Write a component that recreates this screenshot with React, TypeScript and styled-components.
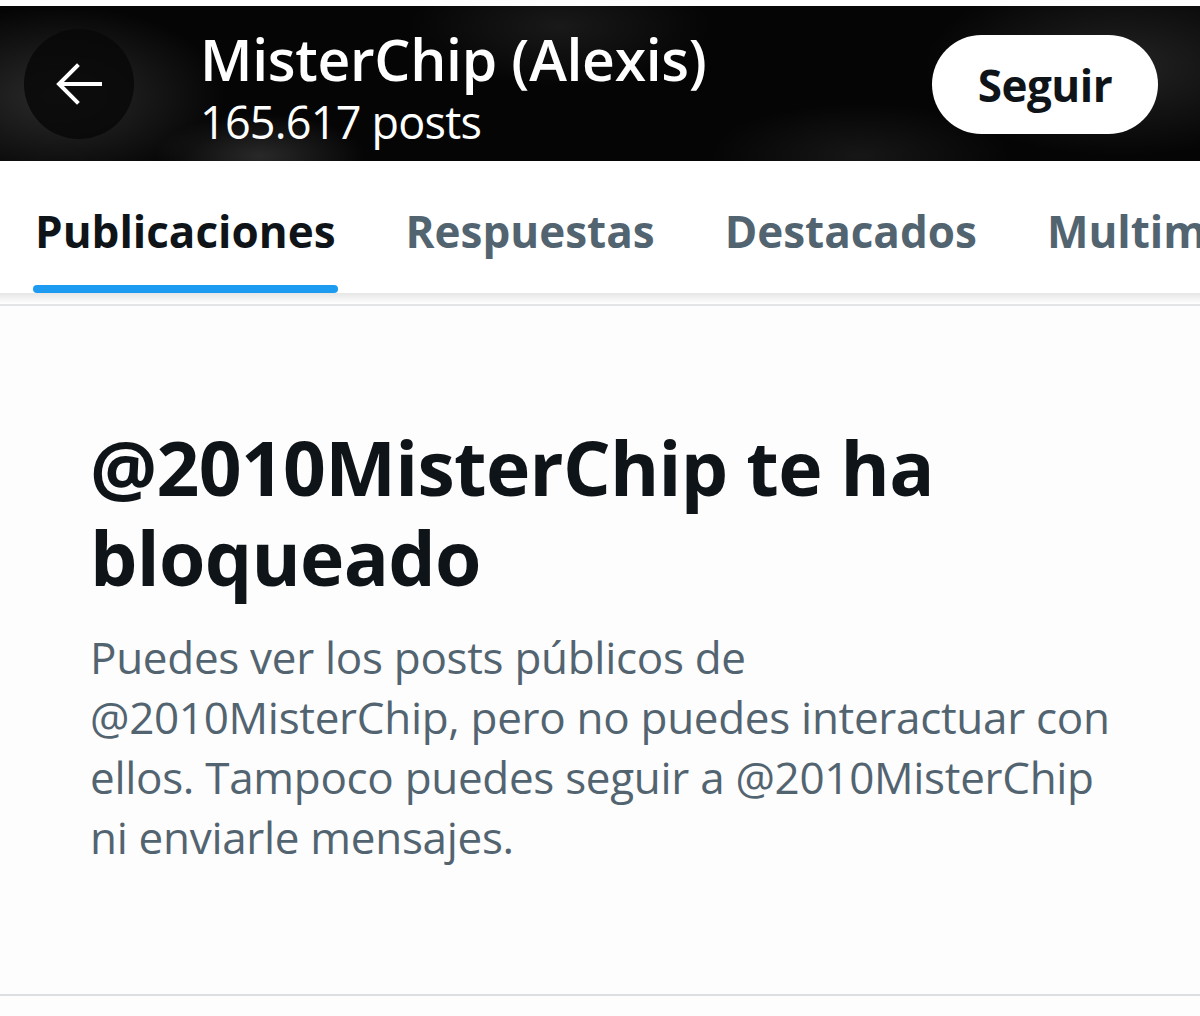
import React from "react";
import styled, { createGlobalStyle } from "styled-components";

const GlobalStyle = createGlobalStyle`
  html, body { margin: 0; padding: 0; background: #ffffff; }
  body { font-family: "Open Sans", "Liberation Sans", Arial, sans-serif; }
  * { box-sizing: border-box; }
`;

const Page = styled.div`
  width: 1200px;
  min-height: 1016px;
  padding-top: 6px;
  background: #fdfdfd;
  overflow: hidden;
`;

const Header = styled.header`
  height: 155px;
  display: flex;
  align-items: center;
  padding: 0 42px 0 24px;
  background:
    radial-gradient(ellipse 150px 60px at 260px 150px, rgba(70,70,70,0.55), transparent 70%),
    radial-gradient(ellipse 220px 120px at 60px 90px, rgba(60,60,60,0.7), transparent 75%),
    radial-gradient(ellipse 260px 120px at 1120px 60px, rgba(55,55,55,0.6), transparent 75%),
    radial-gradient(ellipse 200px 80px at 560px 20px, rgba(45,45,45,0.5), transparent 75%),
    radial-gradient(ellipse 200px 70px at 860px 150px, rgba(40,40,40,0.5), transparent 75%),
    #050505;
  color: #ffffff;
`;

const BackButton = styled.button`
  width: 110px;
  height: 110px;
  border-radius: 50%;
  border: none;
  background: rgba(8, 8, 8, 0.85);
  display: flex;
  align-items: center;
  justify-content: center;
  padding: 0;
  flex-shrink: 0;
`;

const TitleBlock = styled.div`
  margin-left: 66px;
  display: flex;
  flex-direction: column;
  margin-top: 8px;
`;

const Name = styled.div`
  font-size: 57px;
  font-weight: 600;
  line-height: 62px;
  letter-spacing: -0.3px;
`;

const Count = styled.div`
  margin-top: 6px;
  font-size: 45px;
  font-weight: 400;
  line-height: 52px;
  letter-spacing: -0.8px;
`;

const FollowButton = styled.button`
  margin-left: auto;
  width: 226px;
  height: 99px;
  border-radius: 50px;
  border: none;
  background: #ffffff;
  color: #0f1419;
  font-family: inherit;
  font-size: 44px;
  font-weight: 700;
  letter-spacing: -0.5px;
  margin-top: 2px;
`;

const TabBar = styled.nav`
  height: 132px;
  display: flex;
  align-items: stretch;
  background: #ffffff;
  white-space: nowrap;
`;

const Tab = styled.div<{ $active?: boolean }>`
  position: relative;
  padding: 8px 35px 0 35px;
  display: flex;
  align-items: center;
  font-size: 44px;
  font-weight: 700;
  letter-spacing: 0;
  color: ${(p) => (p.$active ? "#0f1419" : "#536471")};
`;

const Underline = styled.span`
  position: absolute;
  left: 33px;
  right: 33px;
  bottom: 0;
  height: 8px;
  border-radius: 4px;
  background: #1d9bf0;
`;

const TabShadow = styled.div`
  height: 13px;
  background: linear-gradient(#e6e6e6, #f7f7f7 70%, #ffffff);
  border-bottom: 2px solid #e3e5e7;
`;

const Content = styled.section`
  padding: 116px 90px 0 90px;
  height: 690px;
  border-bottom: 2px solid #dcdfe2;
  background: #fdfdfd;
`;

const Heading = styled.h1`
  margin: 0;
  font-size: 75px;
  font-weight: 700;
  line-height: 90px;
  letter-spacing: -0.7px;
  color: #0f1419;
`;

const Body = styled.p`
  margin: 25px 0 0 0;
  font-size: 44px;
  font-weight: 400;
  line-height: 60px;
  letter-spacing: -0.3px;
  color: #536471;
  max-width: 1040px;
`;

const BackArrow = () => (
  <svg width="48" height="44" viewBox="0 0 48 44" aria-hidden="true">
    <path
      d="M45 22H5M22 4L4 22l18 18"
      fill="none"
      stroke="#ffffff"
      strokeWidth="4"
      strokeLinecap="square"
      strokeLinejoin="miter"
    />
  </svg>
);

export default function App() {
  return (
    <Page>
      <GlobalStyle />
      <Header>
        <BackButton aria-label="Atrás">
          <BackArrow />
        </BackButton>
        <TitleBlock>
          <Name>MisterChip (Alexis)</Name>
          <Count>165.617 posts</Count>
        </TitleBlock>
        <FollowButton>Seguir</FollowButton>
      </Header>
      <TabBar>
        <Tab $active>
          Publicaciones
          <Underline />
        </Tab>
        <Tab>Respuestas</Tab>
        <Tab>Destacados</Tab>
        <Tab>Multimedia</Tab>
      </TabBar>
      <TabShadow />
      <Content>
        <Heading>@2010MisterChip te ha bloqueado</Heading>
        <Body>
          Puedes ver los posts públicos de @2010MisterChip, pero no puedes
          interactuar con ellos. Tampoco puedes seguir a @2010MisterChip ni
          enviarle mensajes.
        </Body>
      </Content>
    </Page>
  );
}
